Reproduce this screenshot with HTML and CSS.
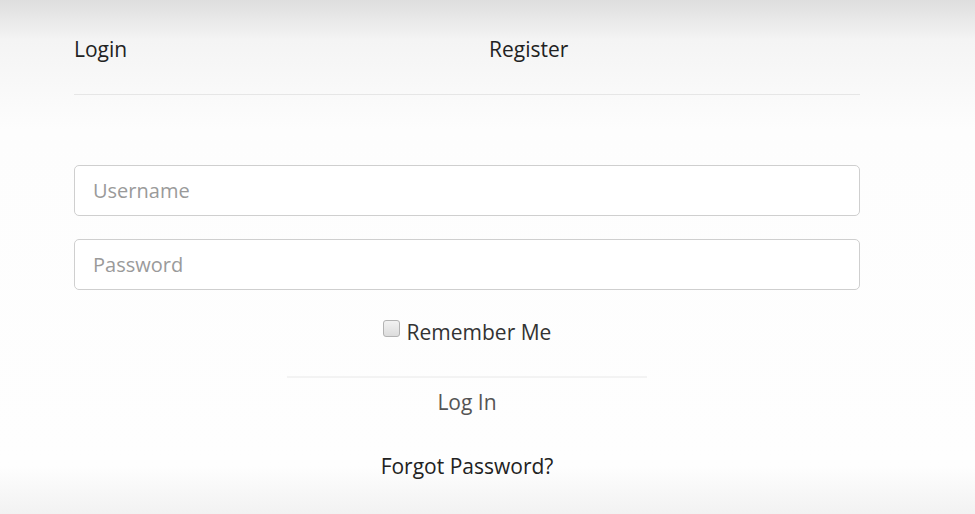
FILE: index.html
```html
<!DOCTYPE html>
<html lang="en">
<head>
    <meta charset="UTF-8">
    <meta name="viewport" content="width=device-width, initial-scale=1.0">
    <title>Login</title>
    <link rel="stylesheet" href="styles.css">
</head>
<body>
    <div class="container">
        <div class="tabs">
            <a href="#" class="tab">Login</a>
            <a href="#" class="tab">Register</a>
        </div>
        <form class="login-form">
            <input type="text" placeholder="Username">
            <input type="password" placeholder="Password">
            <label class="remember">
                <input type="checkbox">
                <span>Remember Me</span>
            </label>
            <button type="submit">Log In</button>
            <a href="#" class="forgot">Forgot Password?</a>
        </form>
    </div>
</body>
</html>
```

FILE: styles.css
```css
html, body {
    height: 100%;
}

body {
    font-family: "Open Sans", Arial, sans-serif;
    margin: 0;
    padding: 0;
    color: #333;
    background: linear-gradient(to bottom, #dedede 0px, #f4f4f4 40px, #fdfdfd 130px, #fefefe 466px, #f2f2f2 514px);
}

.container {
    width: 786px;
    margin-left: 74px;
}

.tabs {
    display: grid;
    grid-template-columns: 415px 1fr;
    padding-top: 36px;
    padding-bottom: 32px;
    border-bottom: 1px solid #e6e6e6;
}

.tab {
    color: #222;
    text-decoration: none;
    font-size: 21px;
    line-height: 26px;
}

.login-form {
    display: flex;
    flex-direction: column;
    align-items: center;
    padding-top: 70px;
}

.login-form input[type="text"],
.login-form input[type="password"] {
    box-sizing: border-box;
    width: 100%;
    height: 51px;
    padding: 0 18px;
    margin-bottom: 23px;
    border: 1px solid #cfcfcf;
    border-radius: 5px;
    background-color: #fff;
    font-family: inherit;
    font-size: 20px;
    color: #333;
}

.login-form input::placeholder {
    color: #9a9a9a;
}

.remember {
    display: flex;
    align-items: center;
    gap: 7px;
    margin-top: 5px;
    font-size: 21px;
    line-height: 28px;
    color: #333;
}

.remember input {
    appearance: none;
    -webkit-appearance: none;
    margin: 0;
    width: 17px;
    height: 17px;
    border: 1px solid #b3b3b3;
    border-radius: 3px;
    background: linear-gradient(to bottom, #f2f2f2, #dcdcdc);
    position: relative;
    top: -4px;
}

button {
    width: 360px;
    margin-top: 30px;
    padding: 10px 0 0;
    background: transparent;
    border: none;
    border-top: 2px solid #f3f3f3;
    font-family: inherit;
    font-size: 21px;
    line-height: 28px;
    color: #555;
    cursor: pointer;
}

.forgot {
    margin-top: 36px;
    color: #222;
    text-decoration: none;
    font-size: 21px;
    line-height: 28px;
}
```
